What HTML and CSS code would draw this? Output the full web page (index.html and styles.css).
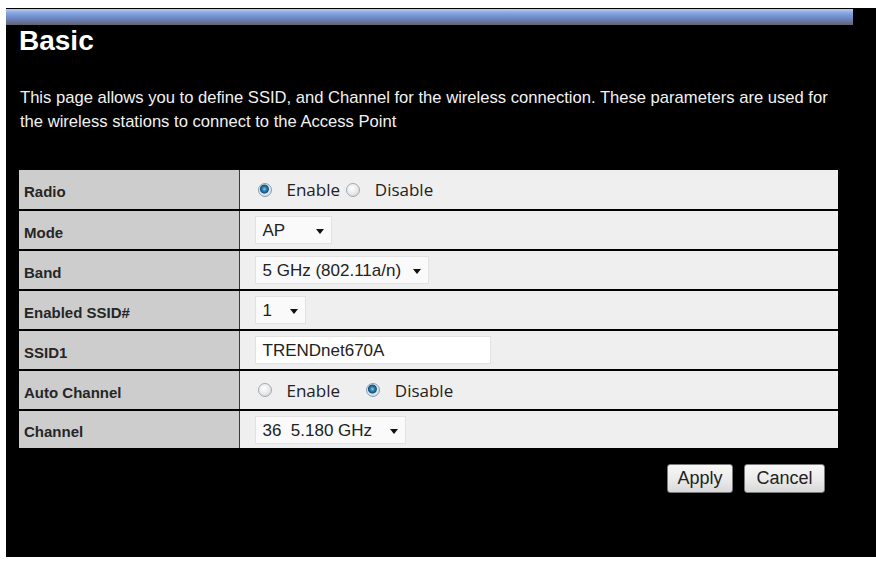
FILE: index.html
```html
<!DOCTYPE html>
<html lang="en">
<head>
    <meta charset="UTF-8">
    <title>Wireless Basic Settings</title>
    <link rel="stylesheet" href="styles.css">
</head>
<body>
    <div class="frame">
        <div class="titlebar"></div>

        <div class="content">
            <h1>Basic</h1>
            <p class="intro">This page allows you to define SSID, and Channel for the wireless connection. These parameters are used for the wireless stations to connect to the Access Point</p>

            <table class="settings">
                <tr>
                    <td class="label">Radio</td>
                    <td class="value">
                        <span class="radio checked"></span><span class="radio-text">Enable</span>
                        <span class="radio"></span><span class="radio-text">Disable</span>
                    </td>
                </tr>
                <tr>
                    <td class="label">Mode</td>
                    <td class="value">
                        <span class="select w-ap">AP<span class="arrow"></span></span>
                    </td>
                </tr>
                <tr>
                    <td class="label">Band</td>
                    <td class="value">
                        <span class="select w-band">5 GHz (802.11a/n)<span class="arrow"></span></span>
                    </td>
                </tr>
                <tr>
                    <td class="label">Enabled SSID#</td>
                    <td class="value">
                        <span class="select w-num">1<span class="arrow"></span></span>
                    </td>
                </tr>
                <tr>
                    <td class="label">SSID1</td>
                    <td class="value">
                        <span class="textbox">TRENDnet670A</span>
                    </td>
                </tr>
                <tr>
                    <td class="label">Auto Channel</td>
                    <td class="value wide">
                        <span class="radio"></span><span class="radio-text">Enable</span>
                        <span class="radio checked"></span><span class="radio-text">Disable</span>
                    </td>
                </tr>
                <tr>
                    <td class="label">Channel</td>
                    <td class="value">
                        <span class="select w-chan">36&nbsp; 5.180 GHz<span class="arrow"></span></span>
                    </td>
                </tr>
            </table>

            <div class="buttons">
                <button class="btn btn-apply">Apply</button>
                <button class="btn btn-cancel">Cancel</button>
            </div>
        </div>
    </div>
</body>
</html>
```

FILE: styles.css
```css
/* ======= General ======= */
body {
    margin: 0;
    padding: 0;
    background: #fff;
    font-family: "Liberation Sans", Arial, sans-serif;
}

.frame {
    margin: 8px 0 0 6px;
    width: 870px;
    height: 549px;
    background: #000;
    padding-top: 1px;
    box-sizing: border-box;
}

.titlebar {
    width: 847px;
    height: 16px;
    background: linear-gradient(to bottom, #b4ccf2 0%, #7f9fdc 30%, #6c86c2 60%, #626370 100%);
}

.content {
    padding: 0 0 0 13px;
}

/* ======= Heading ======= */
.content h1 {
    margin: 0;
    font-size: 28px;
    line-height: 32px;
    font-weight: bold;
    color: #fff;
}

.intro {
    margin: 29px 0 0 1px;
    width: 822px;
    font-size: 16.6px;
    line-height: 24px;
    color: #f2f2f2;
}

/* ======= Settings table ======= */
.settings {
    margin-top: 36px;
    width: 819px;
    border-collapse: collapse;
}

.settings td {
    height: 40px;
    padding: 0;
    border-bottom: 2px solid #000;
    box-sizing: border-box;
}

.settings tr:last-child td {
    height: 38px;
    border-bottom: none;
}

.settings .label {
    width: 220px;
    padding: 4px 0 0 5px;
    background: #cdcdcd;
    border-right: 1px solid #3a3a3a;
    font-size: 15px;
    font-weight: bold;
    color: #262626;
}

.settings .value {
    padding-left: 15px;
    background: #efefef;
    font-size: 17px;
    color: #222;
}

/* ======= Form controls ======= */
.radio {
    display: inline-block;
    vertical-align: middle;
    width: 12px;
    height: 12px;
    margin: 0 15px 0 3px;
    border-radius: 50%;
    border: 1px solid #a4a9b0;
    background: radial-gradient(circle at 40% 35%, #ffffff 0%, #e6e8ea 55%, #c4c8cc 100%);
}

.radio.checked {
    border-color: #8aa0b6;
    background: radial-gradient(circle at 45% 42%, #8fd0f0 0%, #2a80b2 22%, #1b5275 42%, #dfe8f0 52%, #c0ccd8 100%);
}

.radio-text {
    font-family: "Open Sans", sans-serif;
    font-size: 17px;
    vertical-align: middle;
    margin-right: -2px;
}

.wide .radio {
    margin-left: 3px;
    margin-right: 15px;
}

.wide .radio-text {
    margin-right: 18px;
}

.select,
.textbox {
    display: inline-block;
    position: relative;
    height: 28px;
    line-height: 28px;
    padding-left: 7px;
    box-sizing: border-box;
    background: #fafafa;
    border: 1px solid #e2e2e2;
    vertical-align: middle;
}

.arrow {
    position: absolute;
    right: 7px;
    top: 12px;
    width: 0;
    height: 0;
    border-left: 4px solid transparent;
    border-right: 4px solid transparent;
    border-top: 5px solid #111;
}

.w-ap   { width: 77px; }
.w-band { width: 174px; }
.w-num  { width: 51px; }
.w-chan { width: 151px; }

.textbox {
    width: 236px;
    background: #fff;
}

/* ======= Buttons ======= */
.buttons {
    width: 819px;
    margin-top: 16px;
    display: flex;
    justify-content: flex-end;
    gap: 11px;
    padding-right: 13px;
    box-sizing: border-box;
}

.btn {
    height: 29px;
    padding: 0;
    border: 1px solid #7a7a7a;
    border-radius: 3px;
    background: linear-gradient(to bottom, #f8f8f8 0%, #ececec 50%, #d8d8d8 100%);
    font-family: "Liberation Sans", Arial, sans-serif;
    font-size: 18px;
    color: #222;
}

.btn-apply  { width: 66px; }
.btn-cancel { width: 81px; }
```
